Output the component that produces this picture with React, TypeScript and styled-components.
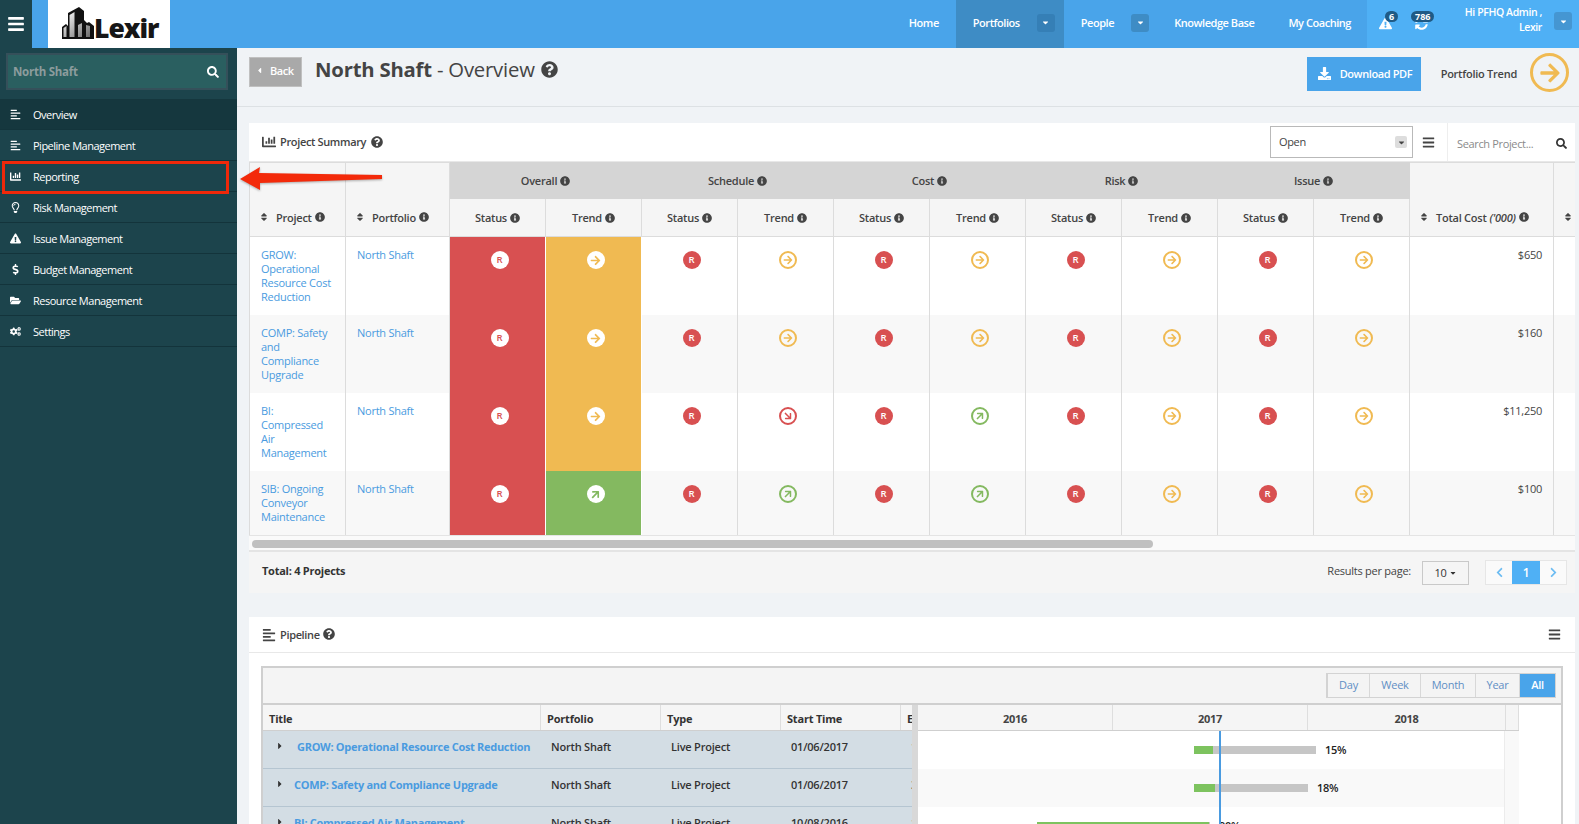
import React from "react";
import styled, { createGlobalStyle } from "styled-components";
import {
  FaBars, FaSearch, FaAlignLeft, FaChartBar, FaRegLightbulb, FaExclamationTriangle, FaDollarSign,
  FaFolderOpen, FaCogs, FaCaretDown, FaCaretLeft, FaCaretRight, FaDownload, FaArrowRight, FaInfoCircle,
  FaQuestionCircle, FaSort, FaChevronLeft, FaChevronRight, FaSyncAlt,
} from "react-icons/fa";

const Global = createGlobalStyle`
  html, body { margin: 0; padding: 0; height: 100%; overflow: hidden; background: #f0f3f6; }
  body { font-family: "Open Sans", "Liberation Sans", sans-serif; font-size: 11px; color: #444; letter-spacing: -0.25px; }
  * { box-sizing: border-box; }
`;

const Shell = styled.div`display: flex; flex-direction: column; width: 1579px; height: 824px; overflow: hidden;`;
const TopBar = styled.header`display: flex; height: 48px; flex: none; background: #49a4ea; color: #fff;`;
const Burger = styled.div`width: 32px; background: #1c444c; display: flex; align-items: center; justify-content: center; font-size: 18px;`;
const LogoBox = styled.div`width: 122px; margin-left: 16px; background: #fff; display: flex; align-items: flex-end; padding: 0 0 9px 14px; gap: 0;`;
const LogoText = styled.span`font-family: "Open Sans", sans-serif; font-weight: 800; font-size: 26.5px; line-height: 22px; color: #161616; letter-spacing: -1px;`;
const TopNav = styled.nav`display: flex; margin-left: auto; height: 48px;`;
const TopItem = styled.div<{ $active?: boolean; $right?: number }>`
  display: flex; align-items: center; gap: 17px; padding: 0 ${p => p.$right ?? 17}px 3px 17px;
  font-weight: 600; font-size: 11px; letter-spacing: -0.45px; background: ${p => (p.$active ? "#3e8cc5" : "transparent")};
`;
const CaretBtn = styled.span<{ $tone?: string; $up?: number }>`
  width: 18px; height: 18px; border-radius: 3px; display: flex; align-items: center; justify-content: center;
  font-size: 9px; background: ${p => p.$tone ?? "#3e8cc5"}; margin-top: ${p => p.$up ?? 0}px;
`;
const NotifArea = styled.div`display: flex; width: 212px; background: #4fb0f5; height: 48px; align-items: center; padding: 0 7px 0 11px;`;
const Bell = styled.span<{ $w: number }>`position: relative; display: flex; justify-content: center; width: ${p => p.$w}px; font-size: 13px; margin-top: -2px;`;
const Badge = styled.span<{ $left: number }>`
  position: absolute; top: -6px; left: ${p => p.$left}px; height: 11px; padding: 0 4px; border-radius: 6px; background: #1f5a85;
  font-size: 9px; line-height: 11px; font-weight: 700; color: #fff; letter-spacing: 0;
`;
const UserName = styled.div`margin: -8px 12px 0 auto; text-align: right; font-weight: 600; font-size: 10.5px; line-height: 15px; letter-spacing: -0.4px;`;

const Body = styled.div`display: flex; flex: 1; min-height: 0;`;
const Sidebar = styled.aside`width: 237px; flex: none; background: #1c444c; color: #fff;`;
const SideSearchWrap = styled.div`padding: 5px 9px 9px 6px; height: 51px;`;
const SideSearch = styled.div`
  height: 37px; background: #2a5f60; border: 2px solid #35505a; display: flex; align-items: center; justify-content: space-between;
  padding: 0 7px 0 5px; font-weight: 700; font-size: 11.5px; color: #8c9c9d;
  svg { color: #fff; font-size: 12px; }
`;
const NavList = styled.ul`list-style: none; margin: 0; padding: 0; position: relative;`;
const NavRow = styled.li<{ $active?: boolean }>`
  height: 31px; display: flex; align-items: center; background: ${p => (p.$active ? "#15373e" : "transparent")};
  border-bottom: 1px solid #13343b; font-size: 11px; letter-spacing: -0.5px; color: #fff;
`;
const NavIcon = styled.span`width: 33px; flex: none; display: flex; justify-content: center; padding-right: 3px; font-size: 11px;`;
const Callout = styled.div`position: absolute; left: 2px; top: 62px; width: 227px; height: 33px; border: 3px solid #f0280a;`;
const ArrowMark = styled.svg`position: absolute; left: 236px; top: 165px; z-index: 5; filter: drop-shadow(0 1px 1px rgba(0,0,0,.3));`;

const Main = styled.main`flex: 1; min-width: 0; position: relative;`;
const TitleBar = styled.div`height: 59px; border-bottom: 1px solid #dde1e4; display: flex; padding: 9px 10px 0 12px;`;
const BackBtn = styled.div`
  width: 53px; height: 30px; background: #a9a9a9; border: 1px solid #c0c0c0; color: #fff; font-weight: 600; font-size: 11px; letter-spacing: -0.45px;
  display: flex; align-items: center; gap: 6px; padding: 0 0 4px 5px; svg { font-size: 9px; }
`;
const Heading = styled.h1`
  margin: -2px 0 0 13px; align-self: flex-start; font-size: 20.3px; line-height: 28px; font-weight: 400; color: #444; display: flex; gap: 5px; align-items: center;
  letter-spacing: -0.2px; b { font-weight: 700; } svg { font-size: 17px; margin-left: 1px; }
`;
const TitleActions = styled.div`margin-left: auto; display: flex; align-items: flex-start;`;
const DownloadBtn = styled.div`
  width: 114px; height: 34px; background: #49a4ea; color: #fff; display: flex; align-items: center; gap: 9px; padding: 0 0 2px 11px;
  font-weight: 600; font-size: 11px; letter-spacing: -0.4px; svg { font-size: 13px; }
`;
const TrendLabel = styled.span`margin: 9px 13px 0 20px; font-weight: 600; font-size: 11px; color: #444;`;
const BigTrend = styled.span`
  width: 39px; height: 39px; margin-top: -4px; border-radius: 50%; border: 3px solid #f0ba52; color: #f0ba52;
  display: flex; align-items: center; justify-content: center; font-size: 22px;
`;

const Card = styled.section<{ $top: number }>`background: #fff; margin: ${p => p.$top}px 4px 0 12px;`;
const CardHead = styled.div<{ $h: number }>`
  height: ${p => p.$h}px; display: flex; align-items: center; padding: 0 0 0 13px; border-bottom: 1px solid #e8e8e8; font-weight: 600; font-size: 11px; letter-spacing: -0.35px; color: #444;
`;
const HeadLabel = styled.span`margin-top: -2px;`;
const HeadIcon = styled.span`display: flex; font-size: 14px; margin-right: 4px;`;
const HelpIcon = styled.span<{ $gap: number }>`display: flex; font-size: 12px; margin: -1px 0 0 ${p => p.$gap}px;`;
const HeadTools = styled.div`margin-left: auto; display: flex; align-items: center; height: 100%;`;
const SelectBox = styled.div`
  width: 143px; height: 32px; border: 1px solid #b9b9b9; display: flex; align-items: center; justify-content: space-between;
  padding: 0 5px 2px 8px; font-weight: 400; color: #444;
`;
const SelectCaret = styled.span`width: 12px; height: 12px; background: #ddd; border-radius: 2px; display: flex; align-items: center; justify-content: center; font-size: 9px; margin-top: 2px;`;
const MenuIcon = styled.span<{ $w: number }>`width: ${p => p.$w}px; margin-right: 4px; display: flex; justify-content: center; font-size: 13px; color: #444;`;
const SearchTool = styled.div`
  width: 128px; height: 100%; border-left: 1px solid #eee; display: flex; align-items: center; justify-content: space-between;
  padding: 2px 8px 0 9px; font-weight: 400; color: #8a8a8a; svg { color: #333; font-size: 11px; }
`;

const TableClip = styled.div`overflow: hidden;`;
const Table = styled.table`border-collapse: collapse; table-layout: fixed; width: 1504px; font-size: 11px;`;
const Th = styled.th<{ $group?: boolean; $h?: number; $tall?: boolean }>`
  height: ${p => p.$h ?? 38}px; background: ${p => (p.$group ? "#d5d5d5" : "#f5f5f5")}; border: 1px solid #dcdcdc;
  ${p => p.$group ? "border-color: #d5d5d5; border-left-color: #e6e6e6;" : ""}
  font-weight: 600; color: #444; text-align: center; padding: 0; vertical-align: middle;
  ${p => p.$tall ? "vertical-align: bottom; padding-bottom: 11px;" : ""}
`;
const ThInner = styled.span<{ $pad?: number }>`display: inline-flex; align-items: center; gap: 3px; justify-content: ${p => (p.$pad ? "flex-start" : "center")}; ${p => (p.$pad ? `width: 100%; padding-left: ${p.$pad}px;` : "")}`;
const Sort = styled.span`display: flex; font-size: 10px; color: #444; margin-right: 4px;`;
const Info = styled.span`display: flex; font-size: 10px; color: #444;`;
const Tr = styled.tr<{ $alt: boolean }>`background: ${p => (p.$alt ? "#f8f8f8" : "#fff")};`;
const Td = styled.td<{ $fill?: string; $right?: boolean }>`
  padding: 11px ${p => (p.$right ? "11px" : "9px")} 11px 11px; vertical-align: top; border: 1px solid #dcdcdc; border-top: 0; border-bottom: 0; line-height: 14px;
  color: #4a9be0; ${p => p.$right ? "text-align: right; color: #444;" : ""}
  ${p => p.$fill ? `background: ${p.$fill}; border-color: #fff;` : ""}
`;
const IconCell = styled(Td)`padding: 14px 0 0 4px; text-align: center; vertical-align: top;`;
const Dot = styled.span<{ $bg: string; $fg: string }>`
  display: inline-flex; width: 18px; height: 18px; border-radius: 50%; background: ${p => p.$bg}; color: ${p => p.$fg};
  align-items: center; justify-content: center; font-size: 9.5px; font-weight: 600; letter-spacing: 0;
`;
const Ring = styled.span<{ $c: string; $deg: number }>`
  display: inline-flex; width: 18px; height: 18px; border-radius: 50%; border: 2px solid ${p => p.$c}; color: ${p => p.$c};
  align-items: center; justify-content: center; font-size: 10px; svg { transform: rotate(${p => p.$deg}deg); }
`;
const TurnDot = styled(Dot)<{ $deg: number }>`font-size: 11px; svg { transform: rotate(${p => p.$deg}deg); }`;
const ScrollTrack = styled.div`height: 17px; background: #fafafa; border-top: 1px solid #e4e4e4; border-bottom: 2px solid #e4e4e4; padding: 4px 0 0 3px;`;
const ScrollThumb = styled.div`width: 901px; height: 8px; border-radius: 4px; background: #c0c0c0;`;
const Footer = styled.div`height: 41px; background: #f5f5f5; display: flex; align-items: center; padding: 0 8px 0 13px; font-size: 11px; color: #333;`;
const TotalLabel = styled.b`font-weight: 700; margin-top: -4px;`;
const PerPage = styled.span`margin-left: auto; color: #444; margin-top: -5px;`;
const PageSize = styled.span`
  width: 47px; height: 24px; margin: 0 16px 0 11px; border: 1px solid #c9c9c9; display: flex; align-items: center; justify-content: center; gap: 2px; svg { font-size: 8px; }
`;
const Pager = styled.div`display: flex; height: 25px; border: 1px solid #e6e6e6;`;
const PageBtn = styled.span<{ $on?: boolean }>`
  width: ${p => (p.$on ? 28 : 26)}px; display: flex; align-items: center; justify-content: center; font-size: ${p => (p.$on ? 12 : 11)}px;
  background: ${p => (p.$on ? "#4fb0f5" : "#fafafa")}; color: ${p => (p.$on ? "#fff" : "#6cbcf2")}; font-weight: 600;
`;

const GanttWrap = styled.div`padding: 13px 12px 0 12px;`;
const GanttBox = styled.div`border: 2px solid #cfcfcf; border-bottom: 0;`;
const GanttBar = styled.div`height: 37px; background: #f4f4f4; border-bottom: 2px solid #cfcfcf; display: flex; justify-content: flex-end; padding: 5px 5px 0 0;`;
const ScaleGroup = styled.div`display: flex; height: 25px; border: 1px solid #d3d3d3; border-left-width: 2px;`;
const ScaleBtn = styled.span<{ $w: number; $on?: boolean }>`
  width: ${p => p.$w}px; display: flex; align-items: center; justify-content: center; padding-bottom: 2px; border-left: 1px solid #d8d8d8; font-size: 11px;
  background: ${p => (p.$on ? "#49a4ea" : "transparent")}; color: ${p => (p.$on ? "#fff" : "#5f8fc4")}; font-weight: ${p => (p.$on ? 600 : 400)};
  &:first-child { border-left: 0; }
`;
const GanttPanes = styled.div`display: flex; height: 200px;`;
const LeftPane = styled.div`width: 649px; overflow: hidden; flex: none;`;
const GridRow = styled.div<{ $head?: boolean }>`
  display: grid; grid-template-columns: 278px 120px 120px 120px 120px; height: ${p => (p.$head ? 26 : 38)}px; font-size: 11px; font-weight: 600; letter-spacing: -0.2px;
  background: ${p => (p.$head ? "#f5f5f5" : "#d3dde4")}; border-bottom: ${p => (p.$head ? "1px solid #cfcfcf" : "1px solid #b5c5d1")}; color: #333;
`;
const HeadCell = styled.div`display: flex; align-items: center; padding: 2px 0 0 6px; border-right: 1px solid #dedede; font-weight: 700; white-space: nowrap; overflow: hidden;`;
const BodyCell = styled.div`display: flex; align-items: center; padding: 0 0 7px 10px; white-space: nowrap; overflow: hidden;`;
const TitleCell = styled(BodyCell)<{ $gap: number }>`
  padding-left: 12px; color: #4a9be0; font-weight: 700; letter-spacing: -0.3px; gap: ${p => p.$gap}px; svg { color: #333; font-size: 10px; flex: none; }
`;
const Splitter = styled.div`width: 6px; flex: none; background: #d8d8d8;`;
const RightPane = styled.div`width: 601px; flex: none; position: relative;`;
const YearRow = styled.div`display: grid; grid-template-columns: 195px 195px 198px 13px; height: 26px; background: #f5f5f5; border-bottom: 1px solid #cfcfcf;`;
const Year = styled.div`display: flex; align-items: center; justify-content: center; padding-top: 2px; border-right: 1px solid #dedede; font-weight: 700; font-size: 11px;`;
const ChartRow = styled.div<{ $alt: boolean }>`
  width: 586px; height: 38px; padding-top: 15px; display: flex; align-items: flex-start; background: ${p => (p.$alt ? "#f9f9f9" : "#fff")};
`;
const BarDone = styled.span`height: 8px; background: #7dc35f; flex: none;`;
const BarLeft = styled.span`height: 8px; background: #c6c6c6; flex: none;`;
const BarPct = styled.span`margin: -3px 0 0 9px; font-size: 11px; font-weight: 600; color: #222; line-height: 14px;`;
const ScrollGutter = styled.div`position: absolute; right: 0; top: 26px; width: 15px; bottom: 0; background: #f9f9f9; border-left: 1px solid #ececec;`;
const TodayLine = styled.div`position: absolute; left: 301px; top: 26px; bottom: 0; width: 2px; background: #4a9be0;`;

const nav: [string, React.ReactNode][] = [
  ["Overview", <FaAlignLeft />], ["Pipeline Management", <FaAlignLeft />], ["Reporting", <FaChartBar />],
  ["Risk Management", <FaRegLightbulb />], ["Issue Management", <FaExclamationTriangle />], ["Budget Management", <FaDollarSign />],
  ["Resource Management", <FaFolderOpen />], ["Settings", <FaCogs />],
];

const RED = "#d85051", YEL = "#f0ba52", GRN = "#84b960";
type T = "r" | "u" | "d";
const tc = { r: [YEL, 0], u: [GRN, -45], d: [RED, 45] } as const;
const rows: { name: string; overall: T; sched: T; cost: T; cost$: string }[] = [
  { name: "GROW: Operational Resource Cost Reduction", overall: "r", sched: "r", cost: "r", cost$: "$650" },
  { name: "COMP: Safety and Compliance Upgrade", overall: "r", sched: "r", cost: "r", cost$: "$160" },
  { name: "BI: Compressed Air Management", overall: "r", sched: "d", cost: "u", cost$: "$11,250" },
  { name: "SIB: Ongoing Conveyor Maintenance", overall: "u", sched: "u", cost: "u", cost$: "$100" },
];

const InfoI = () => <Info><FaInfoCircle /></Info>;
const TrendRing = ({ t }: { t: T }) => <Ring $c={tc[t][0]} $deg={tc[t][1]}><FaArrowRight /></Ring>;
const StatusPair = ({ t }: { t: T }) => (
  <>
    <IconCell><Dot $bg={RED} $fg="#fff">R</Dot></IconCell>
    <IconCell><TrendRing t={t} /></IconCell>
  </>
);
const SubHead = () => (
  <>
    <Th><ThInner>Status <InfoI /></ThInner></Th>
    <Th><ThInner>Trend <InfoI /></ThInner></Th>
  </>
);

const Logo = () => (
  <svg width="32" height="32" viewBox="0 0 32 32" aria-hidden="true">
    <defs>
      <linearGradient id="gl" x1="0" x2="1" y1="0" y2="1"><stop offset="0" stopColor="#fff" /><stop offset="1" stopColor="#6d6d6d" /></linearGradient>
    </defs>
    <path d="M0 32V20l4-3 2 2V6l11-6 5 4v9l3 3 2-1 5 4v13z" fill="#111" />
    <path d="M7.5 30V8l5-3v25zM1.5 30V21l3-2v11zM20 30V16l-4 2v12zM24 30V18l4 1v11z" fill="url(#gl)" />
  </svg>
);

const gantt = [
  { t: "GROW: Operational Resource Cost Reduction", gap: 12, s: "01/06/2017", e: "12/31/2017", left: 276, done: 19, rest: 103, pct: "15%" },
  { t: "COMP: Safety and Compliance Upgrade", gap: 9, s: "01/06/2017", e: "31/12/2017", left: 276, done: 21, rest: 93, pct: "18%" },
  { t: "BI: Compressed Air Management", gap: 9, s: "10/08/2016", e: "12/31/2017", left: 119, done: 172, rest: 1, pct: "90%" },
];

export default function App() {
  return (
    <Shell>
      <Global />
      <TopBar>
        <Burger><FaBars /></Burger>
        <LogoBox><Logo /><LogoText>Lexir</LogoText></LogoBox>
        <TopNav>
          <TopItem>Home</TopItem>
          <TopItem $active $right={9}>Portfolios<CaretBtn $tone="#357fb6"><FaCaretDown /></CaretBtn></TopItem>
          <TopItem $right={8}>People<CaretBtn><FaCaretDown /></CaretBtn></TopItem>
          <TopItem>Knowledge Base</TopItem>
          <TopItem $right={16}>My Coaching</TopItem>
        </TopNav>
        <NotifArea>
          <Bell $w={14}><FaExclamationTriangle /><Badge $left={7}>6</Badge></Bell>
          <Bell $w={58}><FaSyncAlt /><Badge $left={19}>786</Badge></Bell>
          <UserName>Hi PFHQ Admin ,<br />Lexir</UserName>
          <CaretBtn $tone="#4596d2" $up={-6}><FaCaretDown /></CaretBtn>
        </NotifArea>
      </TopBar>
      <Body>
        <Sidebar>
          <SideSearchWrap><SideSearch>North Shaft<FaSearch /></SideSearch></SideSearchWrap>
          <NavList>
            {nav.map(([label, icon], i) => (
              <NavRow key={label} $active={i === 0}><NavIcon>{icon}</NavIcon>{label}</NavRow>
            ))}
            <Callout />
          </NavList>
        </Sidebar>
        <Main>
          <TitleBar>
            <BackBtn><FaCaretLeft />Back</BackBtn>
            <Heading><span><b>North Shaft</b> - Overview</span><FaQuestionCircle /></Heading>
            <TitleActions>
              <DownloadBtn><FaDownload />Download PDF</DownloadBtn>
              <TrendLabel>Portfolio Trend</TrendLabel>
              <BigTrend><FaArrowRight /></BigTrend>
            </TitleActions>
          </TitleBar>
          <Card $top={16}>
            <CardHead $h={39}>
              <HeadIcon><FaChartBar /></HeadIcon><HeadLabel>Project Summary</HeadLabel><HelpIcon $gap={5}><FaQuestionCircle /></HelpIcon>
              <HeadTools>
                <SelectBox>Open<SelectCaret><FaCaretDown /></SelectCaret></SelectBox>
                <MenuIcon $w={30}><FaBars /></MenuIcon>
                <SearchTool>Search Project...<FaSearch /></SearchTool>
              </HeadTools>
            </CardHead>
            <TableClip>
              <Table>
                <colgroup>
                  <col width={96} /><col width={104} />
                  {Array.from({ length: 10 }, (_, i) => <col key={i} width={96} />)}
                  <col width={144} /><col width={200} />
                </colgroup>
                <thead>
                  <tr>
                    <Th rowSpan={2} $tall><ThInner $pad={9}><Sort><FaSort /></Sort>Project <InfoI /></ThInner></Th>
                    <Th rowSpan={2} $tall><ThInner $pad={9}><Sort><FaSort /></Sort>Portfolio <InfoI /></ThInner></Th>
                    {["Overall", "Schedule", "Cost", "Risk", "Issue"].map(g => (
                      <Th key={g} colSpan={2} $group $h={36}><ThInner>{g} <InfoI /></ThInner></Th>
                    ))}
                    <Th rowSpan={2} $tall><ThInner $pad={9}><Sort><FaSort /></Sort>Total Cost <i>('000)</i> <InfoI /></ThInner></Th>
                    <Th rowSpan={2} $tall><ThInner $pad={9}><Sort><FaSort /></Sort></ThInner></Th>
                  </tr>
                  <tr><SubHead /><SubHead /><SubHead /><SubHead /><SubHead /></tr>
                </thead>
                <tbody>
                  {rows.map((r, i) => (
                    <Tr key={r.name} $alt={i % 2 === 1}>
                      <Td>{r.name}</Td>
                      <Td>North Shaft</Td>
                      <IconCell $fill={RED}><Dot $bg="#fff" $fg={RED}>R</Dot></IconCell>
                      <IconCell $fill={r.overall === "u" ? GRN : YEL}>
                        <TurnDot $bg="#fff" $fg={r.overall === "u" ? GRN : YEL} $deg={tc[r.overall][1]}><FaArrowRight /></TurnDot>
                      </IconCell>
                      <StatusPair t={r.sched} />
                      <StatusPair t={r.cost} />
                      <StatusPair t="r" />
                      <StatusPair t="r" />
                      <Td $right>{r.cost$}</Td>
                      <Td $right />
                    </Tr>
                  ))}
                </tbody>
              </Table>
            </TableClip>
            <ScrollTrack><ScrollThumb /></ScrollTrack>
            <Footer>
              <TotalLabel>Total: 4 Projects</TotalLabel>
              <PerPage>Results per page:</PerPage>
              <PageSize>10<FaCaretDown /></PageSize>
              <Pager>
                <PageBtn><FaChevronLeft /></PageBtn>
                <PageBtn $on>1</PageBtn>
                <PageBtn><FaChevronRight /></PageBtn>
              </Pager>
            </Footer>
          </Card>
          <Card $top={24}>
            <CardHead $h={36}>
              <HeadIcon><FaAlignLeft /></HeadIcon>Pipeline<HelpIcon $gap={3}><FaQuestionCircle /></HelpIcon>
              <HeadTools><MenuIcon $w={34}><FaBars /></MenuIcon></HeadTools>
            </CardHead>
            <GanttWrap>
              <GanttBox>
                <GanttBar>
                  <ScaleGroup>
                    <ScaleBtn $w={41}>Day</ScaleBtn>
                    <ScaleBtn $w={51}>Week</ScaleBtn>
                    <ScaleBtn $w={55}>Month</ScaleBtn>
                    <ScaleBtn $w={44}>Year</ScaleBtn>
                    <ScaleBtn $w={36} $on>All</ScaleBtn>
                  </ScaleGroup>
                </GanttBar>
                <GanttPanes>
                  <LeftPane>
                    <GridRow $head>
                      <HeadCell>Title</HeadCell><HeadCell>Portfolio</HeadCell><HeadCell>Type</HeadCell><HeadCell>Start Time</HeadCell><HeadCell>End Time</HeadCell>
                    </GridRow>
                    {gantt.map(g => (
                      <GridRow key={g.t}>
                        <TitleCell $gap={g.gap}><FaCaretRight />{g.t}</TitleCell>
                        <BodyCell>North Shaft</BodyCell>
                        <BodyCell>Live Project</BodyCell>
                        <BodyCell>{g.s}</BodyCell>
                        <BodyCell>{g.e}</BodyCell>
                      </GridRow>
                    ))}
                  </LeftPane>
                  <Splitter />
                  <RightPane>
                    <YearRow><Year>2016</Year><Year>2017</Year><Year>2018</Year><Year /></YearRow>
                    {gantt.map((g, i) => (
                      <ChartRow key={g.t} $alt={i % 2 === 1}>
                        <BarDone style={{ width: g.done, marginLeft: g.left }} />
                        <BarLeft style={{ width: g.rest }} />
                        <BarPct>{g.pct}</BarPct>
                      </ChartRow>
                    ))}
                    <ScrollGutter />
                    <TodayLine />
                  </RightPane>
                </GanttPanes>
              </GanttBox>
            </GanttWrap>
          </Card>
        </Main>
      </Body>
      <ArrowMark width="150" height="28" viewBox="0 0 150 28">
        <path d="M4 14 L24 2 L23 8 L146 10 L146 14 L24 18 L24 25 Z" fill="#f32a0a" />
      </ArrowMark>
    </Shell>
  );
}
